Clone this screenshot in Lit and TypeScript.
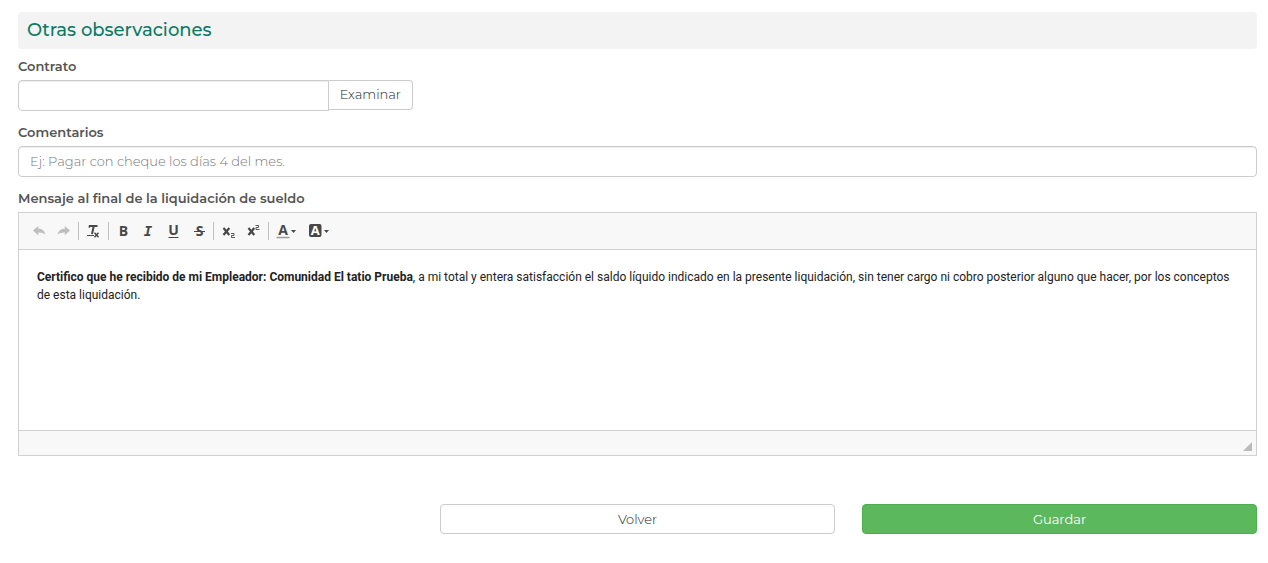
import { LitElement, html, svg, css } from "lit";
import { customElement, property } from "lit/decorators.js";

const icons: Record<string, unknown> = {
  undo: svg`<path d="M2 7.500 7.200 3v2.700c3.800 0 6.300 1.800 7.300 6-1.900-1.800-4.300-2.400-7.300-2.300v2.800z" fill="currentColor"/>`,
  redo: svg`<path d="M14 7.500 8.800 3v2.700c-3.800 0-6.300 1.800-7.300 6 1.900-1.800 4.300-2.400 7.300-2.300v2.800z" fill="currentColor"/>`,
  clear: svg`<path d="M3 3h8.500M7.800 3 6 11" stroke="currentColor" stroke-width="2" fill="none"/><path d="M3.200 2.500v2.500M1 12.500h7" stroke="currentColor" stroke-width="1"/><path d="m8.500 9.800 4 4.500m0-4.500-4 4.500" stroke="currentColor" stroke-width="1.500"/>`,
  bold: svg`<text x="7.500" y="13" text-anchor="middle" class="sans">B</text>`,
  italic: svg`<text x="7" y="13" text-anchor="middle" class="serif">I</text>`,
  underline: svg`<text x="7.500" y="12" text-anchor="middle" class="sans">U</text><path d="M2.500 14.500h10" stroke="currentColor"/>`,
  strike: svg`<text x="8.500" y="13" text-anchor="middle" class="sans">S</text><path d="M3 8.500h11" stroke="currentColor"/>`,
  sub: svg`<path d="m2.500 5 5.800 7m0-7-5.800 7" stroke="currentColor" stroke-width="2.200"/><path d="M10 10.500h3v2h-2.500v2H14" stroke="currentColor" fill="none" stroke-width=".9"/>`,
  sup: svg`<path d="m2.500 5 5.800 7m0-7-5.800 7" stroke="currentColor" stroke-width="2.200"/><path d="M9.500 2.500h3v2H10v2h3.500" stroke="currentColor" fill="none" stroke-width=".9"/>`,
  color: svg`<text x="8" y="12" text-anchor="middle" class="sans">A</text><path d="M1.500 14.500h13" stroke="#9a9a9a" stroke-width="1.500"/>`,
  background: svg`<rect x="1" y="1" width="12.500" height="13" rx="2" fill="currentColor"/><text x="7.200" y="12" text-anchor="middle" class="sans small">A</text>`,
};

@customElement("tool-button")
class ToolButton extends LitElement {
  @property() icon = "";
  @property() name = "";
  @property({ type: Boolean }) disabled = false;
  @property({ type: Boolean }) menu = false;

  static styles = css`
    :host { display: block; }
    button {
      display: flex; align-items: center; justify-content: center;
      min-width: 25px; height: 26px; padding: 0 4px;
      border: 0; background: none; color: #484848; cursor: pointer;
    }
    button:disabled { opacity: .32; cursor: default; }
    svg { display: block; flex: none; overflow: visible; }
    .sans { font: bold 14px "Open Sans", sans-serif; fill: currentColor; }
    .serif { font: italic bold 14px "DejaVu Sans Mono", monospace; fill: currentColor; }
    .small { font-size: 13px; fill: #fff; }
    .arrow { margin-right: 4px; }
  `;

  render() {
    return html`<button type="button" aria-label=${this.name} title=${this.name} ?disabled=${this.disabled}>
      <svg width="16" height="16" viewBox="0 0 16 16">${icons[this.icon]}</svg>
      ${this.menu ? html`<svg class="arrow" width="5" height="3" viewBox="0 0 5 3"><path d="M0 0h5L2.500 3z" fill="currentColor"/></svg>` : ""}
    </button>`;
  }
}

@customElement("app-root")
class AppRoot extends LitElement {
  static styles = css`
    :host {
      display: block; padding: 12px 11px 29px 18px;
      font: 300 13px/18px Montserrat, Inter, sans-serif; color: #555; background: #fff;
    }
    * { box-sizing: border-box; }
    h2 {
      margin: 0 0 8px; padding: 6px 9px 7px; border-radius: 4px; background: #f3f3f3;
      color: #0d7a66; font-size: 18px; line-height: 24px; font-weight: 500;
    }
    .columns { display: grid; grid-template-columns: repeat(3, 1fr); column-gap: 27px; }
    .field { margin-bottom: 12px; }
    .label { display: block; margin-bottom: 5px; font-weight: 600; color: #555; }
    input {
      display: block; width: 100%; min-width: 0; height: 31px; padding: 0 11px 2px;
      border: 1px solid #ccc; border-radius: 4px; background: #fff; color: #555;
      font: inherit; box-shadow: inset 0 1px 1px rgba(0, 0, 0, .075);
    }
    input::placeholder { color: #777; opacity: 1; }
    .group { display: flex; align-items: flex-start; }
    .group input { flex: 1; border-radius: 4px 0 0 4px; }
    .btn {
      height: 30px; padding: 0 11px; border: 1px solid #ccc; border-radius: 4px;
      background: #fff; color: #222; font: inherit; cursor: pointer;
    }
    .group .btn { padding-bottom: 2px; border-left: 0; border-radius: 0 4px 4px 0; }
    .save { grid-column: 3; background: #5cb85c; border-color: #4cae4c; color: #fff; font-weight: 400; }
    .back { grid-column: 2; }
    .editor { border: 1px solid #d1d1d1; }
    .toolbar {
      display: flex; align-items: center; padding: 5px 7px; background: #f8f8f8;
      border-bottom: 1px solid #d1d1d1;
    }
    .sep { width: 1px; height: 18px; margin: 0 2px; background: #c0c0c0; }
    .content {
      min-height: 180px; padding: 18px; outline: 0; color: #222;
      font: 400 12px/18px Roboto, "Liberation Sans", Arial, sans-serif;
    }
    .content p { margin: 0; }
    .foot {
      display: flex; align-items: flex-end; justify-content: flex-end;
      height: 25px; padding: 4px; background: #f8f8f8; border-top: 1px solid #d1d1d1;
    }
    .actions { margin-top: 48px; }
  `;

  render() {
    return html`
      <h2>Otras observaciones</h2>
      <form @submit=${(e: Event) => e.preventDefault()}>
        <div class="columns field">
          <div>
            <label class="label" for="contrato">Contrato</label>
            <div class="group">
              <input id="contrato" type="text" />
              <button class="btn" type="button">Examinar</button>
            </div>
          </div>
        </div>
        <div class="field">
          <label class="label" for="comentarios">Comentarios</label>
          <input id="comentarios" type="text" placeholder="Ej: Pagar con cheque los días 4 del mes." />
        </div>
        <span class="label" id="mensaje">Mensaje al final de la liquidación de sueldo</span>
        <div class="editor">
          <div class="toolbar" role="toolbar">
            <tool-button icon="undo" name="Deshacer" disabled></tool-button>
            <tool-button icon="redo" name="Rehacer" disabled></tool-button>
            <span class="sep"></span>
            <tool-button icon="clear" name="Eliminar formato"></tool-button>
            <span class="sep"></span>
            <tool-button icon="bold" name="Negrita"></tool-button>
            <tool-button icon="italic" name="Cursiva"></tool-button>
            <tool-button icon="underline" name="Subrayado"></tool-button>
            <tool-button icon="strike" name="Tachado"></tool-button>
            <span class="sep"></span>
            <tool-button icon="sub" name="Subíndice"></tool-button>
            <tool-button icon="sup" name="Superíndice"></tool-button>
            <span class="sep"></span>
            <tool-button icon="color" name="Color de texto" menu></tool-button>
            <tool-button icon="background" name="Color de fondo" menu></tool-button>
          </div>
          <div class="content" contenteditable="true" spellcheck="false" role="textbox" aria-multiline="true" aria-labelledby="mensaje">
            <p><strong>Certifico que he recibido de mi Empleador: Comunidad El tatio Prueba</strong>, a mi total y entera satisfacción el saldo líquido indicado en la presente liquidación, sin tener cargo ni cobro posterior alguno que hacer, por los conceptos de esta liquidación.</p>
          </div>
          <div class="foot">
            <svg width="9" height="9" viewBox="0 0 9 9"><path d="M9 0v9H0z" fill="#bbb"/></svg>
          </div>
        </div>
        <div class="columns actions">
          <button class="btn back" type="button">Volver</button>
          <button class="btn save" type="submit">Guardar</button>
        </div>
      </form>
    `;
  }
}
